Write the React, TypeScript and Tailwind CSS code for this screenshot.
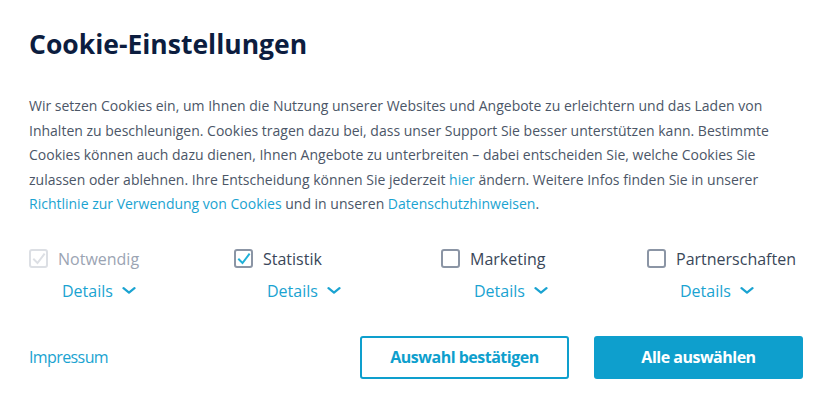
import React from "react";

const Check = ({ color }: { color: string }) => (
  <svg width="14" height="14" viewBox="0 0 14 14" fill="none">
    <path d="M2 7.5 L5.5 11 L12 2.5" stroke={color} strokeWidth="2" strokeLinecap="square" />
  </svg>
);

const Chevron = () => (
  <svg width="14" height="7" viewBox="0 0 14 7" fill="none">
    <path d="M1.5 1.2 L7 5.6 L12.5 1.2" stroke="#1aa3d1" strokeWidth="2.2" strokeLinecap="round" strokeLinejoin="round" />
  </svg>
);

function Option({ label, state }: { label: string; state: "disabled" | "checked" | "empty" }) {
  const box =
    state === "disabled"
      ? "border-[#dcdfe4]"
      : "border-[#8b95a5]";
  return (
    <div className="flex flex-col">
      <div className="flex items-center gap-[10px] h-[24px]">
        <span className={`w-[19px] h-[19px] border-2 rounded-[3px] flex items-center justify-center ${box}`}>
          {state === "checked" && <Check color="#1fb0d8" />}
          {state === "disabled" && <Check color="#dcdfe4" />}
        </span>
        <span className={`text-[16px] ${state === "disabled" ? "text-[#9ba4b3]" : "text-[#3a4759]"}`}>{label}</span>
      </div>
      <div className="flex items-center gap-[9px] pl-[33px] mt-[8px] h-[24px]">
        <span className="text-[16px] text-[#1aa3d1]">Details</span>
        <Chevron />
      </div>
    </div>
  );
}

export default function App() {
  return (
    <div className="w-[832px] h-[406px] bg-white px-[29px] pt-[27px] font-['Open_Sans',sans-serif]">
      <h1 className="text-[26.5px] font-bold text-[#0c1d3f] leading-[34px] tracking-[0px]">Cookie-Einstellungen</h1>
      <p className="mt-[33px] text-[14px] leading-[24.5px] text-[#4b5667] w-[760px]">
        Wir setzen Cookies ein, um Ihnen die Nutzung unserer Websites und Angebote zu erleichtern und das Laden von Inhalten zu beschleunigen. Cookies tragen dazu bei, dass unser Support Sie besser unterstützen kann. Bestimmte Cookies können auch dazu dienen, Ihnen Angebote zu unterbreiten – dabei entscheiden Sie, welche Cookies Sie zulassen oder ablehnen. Ihre Entscheidung können Sie jederzeit <span className="text-[#1aa3d1]">hier</span> ändern. Weitere Infos finden Sie in unserer <span className="text-[#1aa3d1]">Richtlinie zur Verwendung von Cookies</span> und in unseren <span className="text-[#1aa3d1]">Datenschutzhinweisen</span>.
      </p>
      <div className="mt-[30px] grid grid-cols-[205px_207px_206px_1fr]">
        <Option label="Notwendig" state="disabled" />
        <Option label="Statistik" state="checked" />
        <Option label="Marketing" state="empty" />
        <Option label="Partnerschaften" state="empty" />
      </div>
      <div className="mt-[33px] flex items-center">
        <span className="text-[16px] text-[#1aa3d1] tracking-[-0.6px]">Impressum</span>
        <div className="ml-auto flex gap-[25px]">
          <button className="w-[209px] h-[43px] border-2 border-[#0e9fcd] rounded-[3px] text-[#0e9fcd] font-bold text-[16px] tracking-[-0.5px]">Auswahl bestätigen</button>
          <button className="w-[209px] h-[43px] bg-[#0e9fcd] rounded-[3px] text-white font-bold text-[16px] tracking-[-0.5px]">Alle auswählen</button>
        </div>
      </div>
    </div>
  );
}
